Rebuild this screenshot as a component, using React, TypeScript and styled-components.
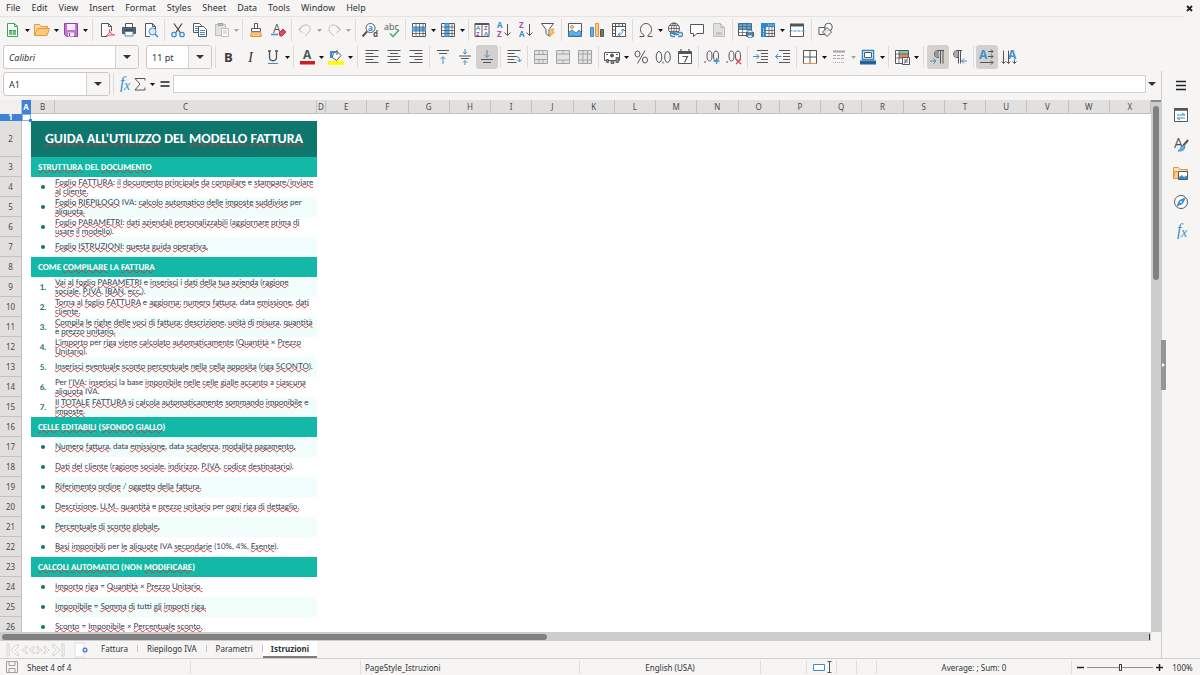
import React from 'react';
import styled, { createGlobalStyle, css } from 'styled-components';

const GlobalStyle = createGlobalStyle`
  *, *::before, *::after { box-sizing: border-box; }
  html, body, #root { height: 100%; }
  body {
    margin: 0;
    overflow: hidden;
    background: #f6f5f4;
    color: #2e3436;
    font-family: "Noto Sans", "Open Sans", sans-serif;
    font-size: 8px;
  }
  button, input { font: inherit; color: inherit; }
  button { background: none; border: 0; padding: 0; }
`;

/* ---------- palette ---------- */
const ink = '#55565a';
const blue = '#3b8fd0';
const orange = '#e8943a';
const line = '#d5d3d1';

/* ---------- layout parts ---------- */
const AppWindow = styled.div`
  display: flex;
  flex-direction: column;
  height: 100vh;
  overflow: hidden;
`;

const MenuBar = styled.nav`
  display: flex;
  align-items: center;
  gap: 11px;
  flex: none;
  height: 17px;
  margin-right: 16px;
  padding-left: 6px;
  border-bottom: 1px solid #e4e2e0;
  font-size: 9px;
  line-height: 16px;
`;

const MenuItem = styled.button``;

const CloseButton = styled.button`
  margin-left: auto;
  margin-right: -9px;
  display: flex;
`;

const ToolBar = styled.div`
  display: flex;
  align-items: center;
  flex: none;
  height: 27px;
  padding: 0 0 1px 2px;
`;

const ToolButton = styled.button<{ $active?: boolean; $muted?: boolean }>`
  display: flex;
  align-items: center;
  justify-content: center;
  flex: none;
  width: 22px;
  height: 24px;
  border-radius: 3px;
  ${p => p.$active && css`background: #d3d0cd;`}
  ${p => p.$muted && css`opacity: 0.5;`}
`;

const ArrowButton = styled.button<{ $muted?: boolean }>`
  display: flex;
  align-items: center;
  justify-content: center;
  flex: none;
  width: 7px;
  height: 24px;
  ${p => p.$muted && css`opacity: 0.35;`}
`;

const Divider = styled.span<{ $wide?: boolean }>`
  flex: none;
  width: ${p => (p.$wide ? 7 : 5)}px;
  height: 22px;
  background: linear-gradient(#dedcda, #dedcda) center / 1px 100% no-repeat;
`;

const Combo = styled.div<{ $width: number }>`
  display: flex;
  flex: none;
  width: ${p => p.$width}px;
  height: 24px;
  margin: 0 6px 0 1px;
  border: 1px solid #cdc7c2;
  border-radius: 3px;
  background: #fff;
  overflow: hidden;
  &:last-of-type { margin-right: 1px; }
`;

const ComboInput = styled.input<{ $italic?: boolean }>`
  flex: 1;
  min-width: 0;
  padding: 0 5px;
  border: 0;
  outline: 0;
  background: none;
  font-size: 9px;
  font-style: ${p => (p.$italic ? 'italic' : 'normal')};
`;

const ComboArrow = styled.button`
  display: flex;
  align-items: center;
  justify-content: center;
  width: 23px;
  border-left: 1px solid ${line};
  background: #f6f5f4;
`;

const Workspace = styled.div`
  display: flex;
  flex: 1;
  min-height: 0;
`;

const Document = styled.main`
  display: flex;
  flex-direction: column;
  flex: 1;
  min-width: 0;
`;

const FormulaBar = styled.div`
  display: flex;
  align-items: center;
  flex: none;
  height: 29px;
  padding: 0 3px 3px 2px;
`;

const FormulaButton = styled.button<{ $width: number }>`
  display: flex;
  align-items: center;
  justify-content: center;
  width: ${p => p.$width}px;
  height: 22px;
`;

const FormulaInput = styled.input`
  flex: 1;
  min-width: 0;
  height: 18px;
  padding: 0 4px;
  border: 1px solid ${line};
  outline: 0;
  background: #fff;
  font-size: 9px;
`;

const SheetArea = styled.div`
  display: flex;
  flex: 1;
  min-height: 0;
`;

const SheetView = styled.div`
  flex: 1;
  min-width: 0;
  overflow: hidden;
  background: #fff;
`;

const VerticalScroll = styled.div`
  flex: none;
  width: 10px;
  padding: 4px 2px 0;
  border-top: 2px solid #8a8a8a;
  background: #cdcdcd;
`;

const HorizontalScroll = styled.div`
  display: flex;
  align-items: center;
  justify-content: space-between;
  flex: none;
  height: 9px;
  margin-right: 10px;
  padding: 0 1px 0 2px;
  background: #cdcdcd;
`;

const VerticalThumb = styled.div`
  height: 33%;
  border-radius: 3px;
  background: #808080;
`;

const HorizontalThumb = styled.div`
  width: 47.5%;
  height: 6px;
  border-radius: 3px;
  background: #808080;
`;

const ScrollEnd = styled.span`
  width: 1px;
  height: 6px;
  background: #333;
`;

/* ---------- sheet ---------- */
const Grid = styled.table`
  width: 100%;
  table-layout: fixed;
  border-collapse: separate;
  border-spacing: 0;
`;

const headCell = css<{ $selected?: boolean }>`
  padding: 0;
  border-right: 1px solid #c3c2c1;
  border-bottom: 1px solid #c3c2c1;
  background: #e1e0df;
  color: #4a4a4a;
  font-weight: 400;
  text-align: center;
  ${p => p.$selected && css`
    background: #3d82d8;
    border-color: #3d82d8;
    color: #fff;
    font-weight: 700;
  `}
`;

const ColumnHead = styled.th<{ $selected?: boolean }>`
  ${headCell}
  height: 14px;
  line-height: 12px;
  overflow: hidden;
`;

const Corner = styled.td`
  padding: 0;
  border-right: 1px solid #c3c2c1;
  background: #f1f0ef;
`;

const RowHead = styled.th<{ $selected?: boolean }>`
  ${headCell}
  line-height: 6px;
`;

const Row = styled.tr<{ $height: number }>`
  height: ${p => p.$height}px;
`;

const Blank = styled.td`
  padding: 0;
`;

const ActiveCell = styled.td`
  position: relative;
  padding: 0;
  border: 1px solid #7fb0ea;
  &::after {
    content: "";
    position: absolute;
    right: -2px;
    bottom: -2px;
    width: 3px;
    height: 3px;
    background: #3d82d8;
  }
`;

const headingFont = css`
  font-family: Carlito, Lato, sans-serif;
  font-weight: 700;
  text-rendering: geometricPrecision;
  white-space: nowrap;
`;

const itemFont = css`
  font-family: Lato, Carlito, sans-serif;
  font-size: 8px;
  line-height: 9px;
  text-rendering: geometricPrecision;
`;

const TitleCell = styled.td`
  ${headingFont}
  padding: 0 0 1px;
  background: #0f766e;
  color: #fff;
  font-size: 14px;
  text-align: center;
`;

const SectionCell = styled.td`
  ${headingFont}
  padding: 0 0 0 7px;
  background: #14b8a6;
  color: #fff;
  font-size: 9px;
  line-height: 9px;
`;

const MarkerCell = styled.td`
  ${itemFont}
  padding: 0;
  color: #0f766e;
  font-weight: 700;
  text-align: center;
`;

const TextCell = styled.td<{ $tinted: boolean }>`
  ${itemFont}
  padding: 0 0 1px;
  background: ${p => (p.$tinted ? '#f0fdfa' : '#fff')};
  color: #334155;
  white-space: pre;
`;

const Misspelled = styled.span`
  text-decoration: underline wavy #e23030 1px;
  text-decoration-skip-ink: none;
  text-underline-offset: -1px;
`;

const Dot = styled.span`
  display: inline-block;
  width: 4px;
  height: 4px;
  border-radius: 2px;
  background: #0f766e;
  vertical-align: middle;
`;

/* ---------- sheet tabs, side bar, status bar ---------- */
const TabBar = styled.div`
  display: flex;
  align-items: stretch;
  flex: none;
  height: 17px;
  padding-left: 5px;
`;

const TabNav = styled.div`
  display: flex;
  align-items: center;
  width: 70px;
`;

const TabNavButton = styled.button`
  display: flex;
  width: 15px;
  justify-content: center;
`;

const AddTab = styled.button`
  display: flex;
  align-items: center;
  width: 14px;
  margin-right: 3px;
`;

const Tab = styled.button<{ $active?: boolean }>`
  padding: 0 10px 0 9px;
  border-bottom: 2px solid transparent;
  background: linear-gradient(#c9c7c5, #c9c7c5) right center / 1px 7px no-repeat;
  ${p => p.$active && css`
    padding: 0 8px;
    border-color: #7c7c7c;
    background: #fff;
    font-weight: 700;
  `}
`;

const SideBar = styled.aside`
  position: relative;
  display: flex;
  flex-direction: column;
  flex: none;
  width: 39px;
  border-left: 1px solid #d0cecc;
`;

const SideButton = styled.button`
  display: flex;
  align-items: center;
  justify-content: center;
  height: 29px;
`;

const SideHandle = styled.button`
  position: absolute;
  left: -1px;
  top: 50%;
  display: flex;
  align-items: center;
  justify-content: center;
  width: 5px;
  height: 50px;
  transform: translateY(-50%);
  background: #959595;
`;

const StatusBar = styled.footer`
  display: flex;
  align-items: center;
  flex: none;
  height: 17px;
  border-top: 1px solid #d0cecc;
`;

const StatusCell = styled.div<{ $width?: number; $left?: boolean }>`
  display: flex;
  align-items: center;
  justify-content: ${p => (p.$left ? 'flex-start' : 'center')};
  gap: 7px;
  flex: ${p => (p.$width ? `0 1 ${p.$width}px` : '1')};
  height: 13px;
  padding-left: ${p => (p.$left ? 4 : 0)}px;
  border-right: 1px solid #e0dedc;
  white-space: nowrap;
`;

const ZoomControls = styled.div`
  display: flex;
  align-items: center;
  gap: 3px;
  flex: none;
  width: 91px;
  padding-left: 5px;
`;

const ZoomStep = styled.button`
  display: flex;
`;

const ZoomSlider = styled.input`
  appearance: none;
  flex: 1;
  min-width: 0;
  height: 8px;
  margin: 0;
  background: linear-gradient(#8e8e8e, #8e8e8e) center / 100% 1px no-repeat;
  &::-webkit-slider-thumb {
    appearance: none;
    width: 3px;
    height: 7px;
    border: 1px solid #444;
    background: #f6f5f4;
  }
`;

const ZoomValue = styled.span`
  flex: none;
  width: 37px;
  padding-left: 2px;
  text-align: center;
`;

/* ---------- icons ---------- */
const IconFrame = styled.svg`
  overflow: visible;
`;

const Svg = ({ children, w = 16, h = 16 }: { children: React.ReactNode; w?: number; h?: number }) => (
  <IconFrame width={w} height={h} viewBox={`0 0 ${w} ${h}`} fill="none" stroke={ink} strokeWidth="1" aria-hidden="true">
    {children}
  </IconFrame>
);

const Glyph = ({ x, y, size, color = ink, bold, italic, serif, children }: {
  x: number; y: number; size: number; color?: string; bold?: boolean; italic?: boolean; serif?: boolean; children: string;
}) => (
  <text
    x={x}
    y={y}
    fontSize={size}
    fill={color}
    stroke="none"
    fontWeight={bold ? 700 : 400}
    fontStyle={italic ? 'italic' : 'normal'}
    fontFamily={serif ? '"Liberation Serif", serif' : '"Open Sans", sans-serif'}
  >
    {children}
  </text>
);

const Triangle = ({ big }: { big?: boolean }) =>
  big ? (
    <svg width="8" height="4" viewBox="0 0 8 4" aria-hidden="true"><path d="M0 0h8L4 4z" fill="#2e3436" /></svg>
  ) : (
    <svg width="5" height="3" viewBox="0 0 5 3" aria-hidden="true"><path d="M0 0h5L2.500 3z" fill="#111" /></svg>
  );

const page = 'M2.500 1.500h7l4 4v9h-11z';

const icons: Record<string, React.ReactNode> = {
  new: <><path d="M2.500 1.500h7l3 3v10h-10z" stroke="#36a852" fill="#fff" /><path d="M9.500 1.500v3h3" stroke="#36a852" /><path d="M4 8h7v5H4z" fill="#36a852" stroke="none" /><path d="M4 10h7M4 12h7M7.500 8v5" stroke="#d6f0dc" strokeWidth=".7" /></>,
  open: <><path d="M.5 13.500v-11h5l1.500 2h6.500v3" fill="#fbd9a2" stroke={orange} /><path d="M.5 13.500l3-7h12l-2.500 7z" fill="#fcca7c" stroke={orange} /></>,
  save: <><path d="M1.500 1.500h13v13h-11l-2-2z" fill="#c276cf" stroke="#9440a5" /><path d="M4 2h8v6H4z" fill="#f8eefa" stroke="none" /><path d="M5 10.500h6v4H5z" fill="#f8eefa" stroke="none" /><path d="M6.500 11v3" stroke="#9440a5" /></>,
  pdf: <><path d="M8 14.500H2.500v-13h7l3 3V9" fill="#fff" /><path d="M9.500 1.500v3h3" /><path d="M7 14c3-2 4-4 3.500-6.500M10.500 8c.5 3 2 4.500 5 5-3-.5-5.500 0-8 1.500" stroke="#e0455a" /></>,
  print: <><path d="M4.500 5V1.500h7V5" fill="#fff" /><path d="M1.500 5.500h13v6h-13z" fill="#66686b" /><path d="M4 9.500h8v4.500H4z" fill="#fff" stroke={blue} /><path d="M3 8h10" stroke="#333" /></>,
  preview: <><path d="M7 14.500H2.500v-13h7l3 3V7" fill="#fff" /><path d="M9.500 1.500v3h3" /><circle cx="9.500" cy="9.500" r="3.500" fill="#d8ecfb" stroke={blue} /><path d="M12 12l3 3" stroke={blue} strokeWidth="1.500" /></>,
  cut: <><path d="M4 1.500l6.500 9.500M12 1.500L5.500 11" stroke="#444" strokeWidth="1.200" /><circle cx="4" cy="12.500" r="2.200" stroke={blue} strokeWidth="1.300" /><circle cx="12" cy="12.500" r="2.200" stroke={blue} strokeWidth="1.300" /></>,
  copy: <><path d="M1.500 1.500h6l2 2v7h-8z" fill="#fff" /><path d="M3 4.500h3M3 6.500h3M3 8.500h3" stroke={blue} /><path d="M6.500 4.500h5l3 3v7h-8z" fill="#fff" /><path d="M8 8.500h5M8 10.500h5M8 12.500h5" stroke={blue} /></>,
  paste: <><path d="M1.500 2.500h10v11h-10z" fill="#cfcfcf" stroke="#888" /><path d="M4 1.500h5v2H4z" fill="#888" /><path d="M7.500 6.500h7v8h-7z" fill="#fff" stroke="#888" /><path d="M9 9h4M9 11h4" stroke="#999" /></>,
  brush: <><path d="M6.500 1.500h3v5h-3z" fill="#fff" /><path d="M3.500 6.500h9v3h-9z" fill="#fff" /><path d="M3.500 10h9l1 4.500h-11z" fill="#fbc684" stroke={orange} /></>,
  clear: <><Glyph x={3} y={11} size={12}>A</Glyph><path d="M1 12.500h7" stroke={blue} strokeWidth="1.500" /><path d="M9 11l4-4 3 3-4 4h-2z" fill="#e0455a" stroke="#c93648" /></>,
  undo: <path d="M1.500 7.500l4-4m-4 4l4 3M2 7.500h1c2-3.500 4-5 7-4.500 4 1 4 6 1 8l-3 3" stroke="#8a8a8a" />,
  redo: <path d="M14.500 7.500l-4-4m4 4l-4 3M14 7.500h-1c-2-3.500-4-5-7-4.500-4 1-4 6-1 8l3 3" stroke="#8a8a8a" />,
  find: <><circle cx="8.500" cy="6" r="4.500" fill="#fff" /><path d="M5 9.500L.5 14.500" strokeWidth="2" /><Glyph x={6} y={9} size={8} color={blue} bold>a</Glyph><Glyph x={11} y={15} size={8} bold>d</Glyph></>,
  spell: <><Glyph x={0} y={8} size={9}>abc</Glyph><path d="M6 11.500l3 3 6-6.500" stroke="#36b067" strokeWidth="1.500" /></>,
  row: <><path d="M1.500 1.500h13v13h-13z" fill="#fff" /><path d="M1.500 5h13v4h-13z" fill="#63b0e8" stroke={blue} /><path d="M5 1.500v13M8.500 1.500v13M12 1.500v13M1.500 11.500h13" strokeWidth=".8" /></>,
  column: <><path d="M1.500 1.500h13v13h-13z" fill="#fff" /><path d="M5 1.500h4v13H5z" fill="#63b0e8" stroke={blue} /><path d="M1.500 5h13M1.500 8.500h13M1.500 11.500h13M12 1.500v13" strokeWidth=".8" /></>,
  sort: <><path d="M1 1.500h14v13H1zM8 2v12" fill="#fff" /><path d="M1 2h14" strokeWidth="2" /><Glyph x={2} y={8} size={6} color={blue} bold>A</Glyph><Glyph x={2} y={14} size={6} color="#a94bb8" bold>Z</Glyph><Glyph x={10} y={8} size={6} color="#a94bb8" bold>Z</Glyph><Glyph x={10} y={14} size={6} color={blue} bold>A</Glyph></>,
  az: <><Glyph x={1} y={6} size={8} color={blue} bold>A</Glyph><Glyph x={1} y={15} size={8} color="#a94bb8" bold>Z</Glyph><path d="M11.500 2v11M8.500 10.500l3 3 3-3" /></>,
  za: <><Glyph x={1} y={6} size={8} color="#a94bb8" bold>Z</Glyph><Glyph x={1} y={15} size={8} color={blue} bold>A</Glyph><path d="M11.500 2v11M8.500 10.500l3 3 3-3" /></>,
  filter: <><path d="M1.500 1.500h12l-4.500 6v6.500l-3-2.500v-4z" fill="#fff" /><path d="M11.500 7L8 11h2.500l-1 4 5-5h-2.500l2-3z" fill="#fcca7c" stroke={orange} strokeWidth=".8" /></>,
  image: <><path d="M1.500 1.500h13v13h-13z" fill="#fff" /><path d="M2 13V10l3-2 4 3 3-3 2 2v4H2z" fill="#63b0e8" stroke={blue} /><circle cx="5" cy="5" r="1.500" fill="#fcca7c" stroke={orange} /></>,
  chart: <><path d="M1.500 5.500h3v9h-3z" fill="#63b0e8" stroke={blue} /><path d="M6.500 1.500h3v13h-3z" fill="#fcca7c" stroke={orange} /><path d="M11.500 7.500h3v7h-3z" fill="#777" /></>,
  pivot: <><path d="M1.500 1.500h13v13h-13z" fill="#fff" /><path d="M1.500 4.500h13M4.500 1.500v13M8 1.500v3M11.500 1.500v3M1.500 8h3M1.500 11.500h3" /><path d="M7 12.500c4 0 5-2 5-5.500m-2 2l2-2 2 2m-5 1.500l-2 2 2 1.500" stroke={blue} /></>,
  omega: <path d="M1.500 14.500h4.500v-1.500C3.500 12 2.500 9.500 2.500 7.500c0-3.500 2.500-6 5.500-6s5.500 2.500 5.500 6c0 2-1 4.500-3.500 5.500v1.500h4.500" />,
  link: <><circle cx="7" cy="6.500" r="5.500" fill="#fff" /><path d="M1.500 6.500h11M7 1v10M2.500 3.500h9M2.500 9.500h9" strokeWidth=".8" /><ellipse cx="7" cy="6.500" rx="2.500" ry="5.500" strokeWidth=".8" /><path d="M8 10.500H5.500a2 2 0 000 4H8m3 0h2.500a2 2 0 000-4H11M7 12.500h5" stroke={blue} strokeWidth="1.300" /></>,
  comment: <path d="M1.500 2.500h13v9H8l-3.500 3v-3h-3z" fill="#fff" />,
  footer: <><path d={page} fill="#ccc" stroke="#888" /><path d="M9.500 1.500v4h4" stroke="#888" /><path d="M5 10h6v3H5z" fill="#999" stroke="none" /></>,
  printRange: <><path d="M.5 1.500h13v12H.5z" fill="#fff" /><path d="M1 2h12v5H1z" fill="#63b0e8" stroke={blue} /><path d="M.5 4.500h13M.5 7.500h13M.5 10.500h13M4.500 1.500v12M9 1.500v12" strokeWidth=".7" /><path d="M8.500 10.500h7v4h-7z" fill="#777" /><path d="M10 8.500h4v2h-4zM10 13h4v2.500h-4z" fill="#fff" stroke={blue} strokeWidth=".8" /></>,
  freeze: <><path d="M1.500 1.500h13v13h-13z" fill="#fff" /><path d="M1 1h5v14H1zM6 1h9v4H6z" fill="#2f86cf" stroke="none" /><path d="M6 8.500h9M6 11.500h9M9 5v10M12 5v10" strokeWidth=".8" /><path d="M3.500 6v8M8 3h6" stroke="#bfe0f7" strokeDasharray="1.500 1" /></>,
  split: <><path d="M1.500 2.500h13v12h-13z" fill="#fff" /><path d="M1 3h14" stroke="#555" strokeWidth="3" /><path d="M.5 9h15" stroke={blue} strokeDasharray="3 1" /></>,
  draw: <><path d="M1 5.500h6v7H1z" fill="#fff" /><circle cx="10.500" cy="5" r="3.800" fill="#fff" /><path d="M4.500 10l4.500-4.500L13.500 10 9 14.500z" fill="#f6f5f4" fillOpacity=".7" /></>,
  bold: <Glyph x={3} y={13} size={13} color="#3a3a3c" bold>B</Glyph>,
  italic: <Glyph x={5} y={13} size={15} color="#3a3a3c" italic serif>I</Glyph>,
  underline: <><path d="M4.500 2v6c0 5 7 5 7 0V2M3 2h3M10 2h3" strokeWidth="1.300" /><path d="M3 14.500h10" stroke={blue} /></>,
  fontColor: <><Glyph x={4} y={10} size={12} bold>A</Glyph><path d="M1 12h15v3.500H1z" fill="#c9211e" stroke="none" /></>,
  fillColor: <><path d="M5 4.500l4-2 4 4-4.500 5-4-3z" fill="#fff" /><path d="M9 1v5" /><path d="M3 9V3h5" stroke={blue} strokeWidth="2" /><path d="M0 12h16v4H0z" fill="#ffff00" stroke="none" /></>,
  left: <path d="M1.500 1.500h13M1.500 4.500h8M1.500 7.500h13M1.500 10.500h8M1.500 13.500h13" />,
  center: <path d="M1.500 1.500h13M4 4.500h8M1.500 7.500h13M4 10.500h8M1.500 13.500h13" />,
  right: <path d="M1.500 1.500h13M6.500 4.500h8M1.500 7.500h13M6.500 10.500h8M1.500 13.500h13" />,
  top: <><path d="M2 1.500h12M4 4.500h8" /><path d="M8 15V8M5.500 10L8 7.500l2.500 2.500" stroke={blue} /></>,
  middle: <><path d="M2 7h12M4 9.500h8" /><path d="M8 0v4.500M6 3l2 2 2-2M8 16v-4M6 13.500l2-2 2 2" stroke={blue} /></>,
  bottom: <><path d="M2 10.500h12M4 13.500h8" /><path d="M8 1v7M5.500 6L8 8.500 10.500 6" stroke={blue} /></>,
  wrap: <><path d="M1.500 1.500h13M1.500 4.500h7M1.500 7.500h9M1.500 10.500h7M1.500 13.500h9" /><path d="M10 7.500c3 0 3.500 1.500 3.500 5M11 10.500l2.500 2.500 2-2.500" stroke={blue} /></>,
  mergeAll: <path d="M1.500 1.500h13v13h-13zM1.500 5.500h13M1.500 10.500h13M6 1.500v4M10 1.500v4M6 10.500v4M10 10.500v4" fill="#d2d2d2" />,
  merge: <path d="M1.500 1.500h13v13h-13zM1.500 5h13M1.500 11h13M8 1.500V5M8 11v3.500" fill="#d2d2d2" />,
  unmerge: <path d="M1.500 1.500h13v13h-13zM1.500 5h13M1.500 11h13M6 1.500v13M10.500 1.500v13" fill="#d2d2d2" />,
  currency: <><path d="M.5 3.500h15v8H.5z" fill="#fff" /><circle cx="8" cy="6.500" r="1.500" fill="#555" /><path d="M2 5.500h2M12 5.500h2" /><path d="M2.500 10.500h2v3h-2zM7 11.500h3v3H7zM12 8.500h2.500v5H12z" fill="#8a8a8a" strokeWidth=".8" /></>,
  percent: <><ellipse cx="4.500" cy="5" rx="2.500" ry="3" /><ellipse cx="12" cy="11" rx="2.500" ry="3" /><path d="M12 1.500L4.500 14.500" /></>,
  number: <><ellipse cx="4" cy="8" rx="2.800" ry="5.500" /><ellipse cx="12.500" cy="8" rx="2.800" ry="5.500" /><path d="M8 12.500v2" /></>,
  date: <><path d="M1.500 2.500h13v12h-13z" fill="#fff" /><path d="M1 4h14" strokeWidth="2" /><path d="M4 0v3M12 0v3M5.500 7.500h5l-3 6" strokeWidth="1.200" /></>,
  addDecimal: <><path d="M1 12v2" /><ellipse cx="5.500" cy="7" rx="2.500" ry="5" /><ellipse cx="12" cy="7" rx="2.500" ry="5" /><path d="M12.500 9v6M9.500 12h6" stroke={blue} strokeWidth="1.300" /></>,
  delDecimal: <><path d="M1 12v2" /><ellipse cx="5.500" cy="7" rx="2.500" ry="5" /><ellipse cx="12" cy="7" rx="2.500" ry="5" /><path d="M10 10l5 5M15 10l-5 5" stroke="#e0455a" strokeWidth="1.300" /></>,
  indent: <><path d="M4 1.500h11M8 4.500h7M8 7.500h7M8 10.500h7M4 13.500h11" /><path d="M0 7.500h6M3.500 5L6 7.500 3.500 10" stroke={blue} /></>,
  outdent: <><path d="M4 1.500h11M8 4.500h7M8 7.500h7M8 10.500h7M4 13.500h11" /><path d="M.5 7.500h6M3 5L.5 7.500 3 10" stroke={blue} /></>,
  borders: <><path d="M1.500 1.500h13v13h-13zM8 1.500v13M1.500 8h13" fill="#fff" /><path d="M1.500 14.500h13" stroke={orange} /></>,
  borderStyle: <><path d="M2 2.500h12" strokeWidth="2" /><path d="M2 6.500h12M2 9.500h12" strokeDasharray="3 1" /><path d="M2 13.500h12" strokeDasharray="1 1" /></>,
  borderColor: <><path d="M2.500 1.500h11v9h-11z" fill="#fff" stroke="#2f86cf" strokeWidth="1.500" /><path d="M4.500 3.500h7v5h-7z" /><path d="M0 11.500h16v4H0z" fill="#2a6099" stroke="none" /></>,
  conditional: <><path d="M1.500 1.500h13v13h-13z" fill="#fff" /><path d="M5 2h9v3H5z" fill="#7ccf91" stroke="none" /><path d="M5 5h9v4H5z" fill="#ee8170" stroke="none" /><path d="M1.500 5h13M1.500 9h13M5 1.500v13" strokeWidth=".8" /><path d="M8.500 8.500h7v7h-7z" fill="#fff" /><path d="M10 11h4M10 13h4M13.500 9.500l-3 5" strokeWidth=".8" /></>,
  ltr: <><path d="M9 8.500H8a3.500 3.500 0 010-7h6M10.500 1.500v13M13 1.500v13" /><path d="M9 2v6H8a3 3 0 010-6z" fill="#999" stroke="none" /><path d="M0 12h6M3.500 9.500L6 12l-2.500 2.500" stroke={blue} /></>,
  rtl: <><path d="M6 8.500H5a3.500 3.500 0 010-7h5M6.500 1.500v13M8.500 1.500v13" /><path d="M6 2v6H5a3 3 0 010-6z" fill="#aaa" stroke="none" /><path d="M15 12H9.500M12 9.500L9.500 12l2.500 2.500" stroke={blue} /></>,
  horizontalText: <><Glyph x={0} y={10} size={12} color={blue} bold>A</Glyph><path d="M9 2.500h5M12 .5l2 2-2 2M9 7.500h5M12 5.500l2 2-2 2M1 13.500h13M12 11.500l2 2-2 2" /></>,
  verticalText: <><Glyph x={7} y={10} size={12} color={blue} bold>A</Glyph><path d="M2.500 1.500v13M.5 12.500l2 2 2-2M7.500 1.500v13M5.500 12.500l2 2 2-2M13.500 10.500v4M11.500 12.500l2 2 2-2" /></>,
  properties: <><path d="M1.500 1.500h13v13h-13z" fill="#fff" /><path d="M1 2.500h14" strokeWidth="2.500" /><path d="M4 8h8M4 11h8M9 6l3 2M7 13l-3-2" stroke={blue} /></>,
  styles: <><Glyph x={1} y={12} size={14}>A</Glyph><path d="M15 4l-5 6" strokeWidth="2" /><path d="M10 9l2 2c-1 4-4 4-7 4 3-1 2-4 5-6z" fill="#63b0e8" stroke={blue} /></>,
  gallery: <><path d="M.5 13.500v-11h5l1.500 2h7.500v3" fill="#fbe3c0" stroke={orange} /><path d="M.5 13.500l1-7h4v7z" fill="#fcca7c" stroke={orange} /><path d="M5.500 6.500h9v8h-9z" fill="#fff" /><path d="M6 12l3-2 2 2 2-1.500 1 1V14H6z" fill={blue} stroke="none" /></>,
  navigator: <><circle cx="8" cy="8" r="6.500" fill="#fff" /><path d="M12 4l-2.500 5.500L4 12l2.500-5.500z" fill={blue} stroke={blue} /><circle cx="8" cy="8" r="1" fill="#fff" stroke="none" /></>,
  menu: <path d="M3 3.500h10M3 7.500h10M3 11.500h10" stroke="#222" strokeWidth="1.500" />,
  fx: <><Glyph x={4} y={12} size={16} color={blue} italic serif>f</Glyph><Glyph x={8} y={14} size={14} color={blue} italic serif>x</Glyph></>,
  sigma: <path d="M13 4.500V2.500H3l5 5.500-5 6h10v-2.500" />,
  equals: <path d="M3.500 6h9M3.500 10h9" strokeWidth="1.800" />,
};

const Icon = ({ name }: { name: string }) => <Svg>{icons[name]}</Svg>;

/* ---------- toolbars ---------- */
type Tool = { id: string; label: string; menu?: boolean; muted?: boolean; active?: boolean } | 'sep' | 'wide';

const standardTools: Tool[] = [
  { id: 'new', label: 'New', menu: true }, { id: 'open', label: 'Open', menu: true }, { id: 'save', label: 'Save', menu: true }, 'wide',
  { id: 'pdf', label: 'Export as PDF' }, { id: 'print', label: 'Print' }, { id: 'preview', label: 'Print Preview' }, 'sep',
  { id: 'cut', label: 'Cut' }, { id: 'copy', label: 'Copy' }, { id: 'paste', label: 'Paste', menu: true, muted: true }, 'sep',
  { id: 'brush', label: 'Clone Formatting' }, { id: 'clear', label: 'Clear Formatting' }, 'sep',
  { id: 'undo', label: 'Undo', menu: true, muted: true }, { id: 'redo', label: 'Redo', menu: true, muted: true }, 'wide',
  { id: 'find', label: 'Find and Replace' }, { id: 'spell', label: 'Spelling' }, 'sep',
  { id: 'row', label: 'Row', menu: true }, { id: 'column', label: 'Column', menu: true }, 'sep',
  { id: 'sort', label: 'Sort' }, { id: 'az', label: 'Sort Ascending' }, { id: 'za', label: 'Sort Descending' }, { id: 'filter', label: 'AutoFilter' }, 'sep',
  { id: 'image', label: 'Image' }, { id: 'chart', label: 'Chart' }, { id: 'pivot', label: 'Pivot Table' }, 'sep',
  { id: 'omega', label: 'Special Character', menu: true }, { id: 'link', label: 'Hyperlink' }, { id: 'comment', label: 'Comment' }, { id: 'footer', label: 'Headers and Footers', muted: true }, 'sep',
  { id: 'printRange', label: 'Print Area' }, { id: 'freeze', label: 'Freeze', menu: true }, { id: 'split', label: 'Split Window' }, 'wide',
  { id: 'draw', label: 'Draw Functions' },
];

const formattingTools: Tool[] = [
  'sep',
  { id: 'bold', label: 'Bold' }, { id: 'italic', label: 'Italic' }, { id: 'underline', label: 'Underline', menu: true }, 'sep',
  { id: 'fontColor', label: 'Font Color', menu: true }, { id: 'fillColor', label: 'Background Color', menu: true }, 'wide',
  { id: 'left', label: 'Align Left' }, { id: 'center', label: 'Center' }, { id: 'right', label: 'Align Right' }, 'sep',
  { id: 'top', label: 'Align Top' }, { id: 'middle', label: 'Center Vertically' }, { id: 'bottom', label: 'Align Bottom', active: true }, 'sep',
  { id: 'wrap', label: 'Wrap Text' }, 'sep',
  { id: 'mergeAll', label: 'Merge and Center', muted: true }, { id: 'merge', label: 'Merge Cells', muted: true }, { id: 'unmerge', label: 'Unmerge Cells', muted: true }, 'sep',
  { id: 'currency', label: 'Currency', menu: true }, { id: 'percent', label: 'Percent' }, { id: 'number', label: 'Number' }, { id: 'date', label: 'Date' }, 'sep',
  { id: 'addDecimal', label: 'Add Decimal Place' }, { id: 'delDecimal', label: 'Delete Decimal Place' }, 'sep',
  { id: 'indent', label: 'Increase Indent' }, { id: 'outdent', label: 'Decrease Indent' }, 'sep',
  { id: 'borders', label: 'Borders', menu: true }, { id: 'borderStyle', label: 'Border Style', menu: true, muted: true }, { id: 'borderColor', label: 'Border Color', menu: true }, 'sep',
  { id: 'conditional', label: 'Conditional', menu: true }, 'wide',
  { id: 'ltr', label: 'Left-To-Right', active: true }, { id: 'rtl', label: 'Right-To-Left' }, 'sep',
  { id: 'horizontalText', label: 'Text direction from left to right', active: true }, { id: 'verticalText', label: 'Text direction from top to bottom' },
];

const Tools = ({ items }: { items: Tool[] }) => (
  <>
    {items.map((tool, i) =>
      typeof tool === 'string' ? (
        <Divider key={i} $wide={tool === 'wide'} />
      ) : (
        <React.Fragment key={tool.id}>
          <ToolButton aria-label={tool.label} $active={tool.active} $muted={tool.muted}><Icon name={tool.id} /></ToolButton>
          {tool.menu && <ArrowButton aria-label={`${tool.label} options`} $muted={tool.muted}><Triangle /></ArrowButton>}
        </React.Fragment>
      ),
    )}
  </>
);

/* ---------- sheet content: words in braces are marked by the spelling checker ---------- */
type SheetRow =
  | { kind: 'title'; text: string }
  | { kind: 'section'; text: string }
  | { kind: 'item'; marker?: string; text: string };

const sheetRows: SheetRow[] = [
  { kind: 'title', text: "{GUIDA} {ALL'UTILIZZO} DEL {MODELLO} {FATTURA}" },
  { kind: 'section', text: '{STRUTTURA} DEL {DOCUMENTO}' },
  { kind: 'item', text: '{Foglio} {FATTURA}: {il} {documento} {principale} {da} {compilare} e {stampare/inviare}\n{al} {cliente.}' },
  { kind: 'item', text: '{Foglio} {RIEPILOGO} IVA: {calcolo} {automatico} {delle} {imposte} {suddivise} per\n{aliquota.}' },
  { kind: 'item', text: '{Foglio} {PARAMETRI}: {dati} {aziendali} {personalizzabili} ({aggiornare} {prima} {di}\n{usare} {il} {modello}).' },
  { kind: 'item', text: '{Foglio} {ISTRUZIONI}: {questa} {guida} {operativa.}' },
  { kind: 'section', text: 'COME {COMPILARE} LA {FATTURA}' },
  { kind: 'item', marker: '1.', text: '{Vai} {al} {foglio} {PARAMETRI} e {inserisci} i {dati} {della} {tua} {azienda} ({ragione}\n{sociale}, {P.IVA}, {IBAN}, {ecc.}).' },
  { kind: 'item', marker: '2.', text: '{Torna} {al} {foglio} {FATTURA} e {aggiorna:} {numero} {fattura}, data {emissione}, {dati}\n{cliente.}' },
  { kind: 'item', marker: '3.', text: '{Compila} {le} {righe} {delle} {voci} {di} {fattura:} {descrizione}, {unità} {di} {misura}, {quantità}\ne {prezzo} {unitario.}' },
  { kind: 'item', marker: '4.', text: "{L'importo} per {riga} {viene} {calcolato} {automaticamente} ({Quantità} × {Prezzo}\n{Unitario})." },
  { kind: 'item', marker: '5.', text: '{Inserisci} {eventuale} {sconto} {percentuale} {nella} {cella} {apposita} ({riga} {SCONTO}).' },
  { kind: 'item', marker: '6.', text: "Per {l'IVA}: {inserisci} la base {imponibile} {nelle} {celle} {gialle} {accanto} a {ciascuna}\n{aliquota} IVA." },
  { kind: 'item', marker: '7.', text: '{Il} {TOTALE} {FATTURA} {si} {calcola} {automaticamente} {sommando} {imponibile} e\n{imposte.}' },
  { kind: 'section', text: '{CELLE} {EDITABILI} ({SFONDO} {GIALLO})' },
  { kind: 'item', text: '{Numero} {fattura}, data {emissione}, data {scadenza}, {modalità} {pagamento.}' },
  { kind: 'item', text: '{Dati} {del} {cliente} ({ragione} {sociale}, {indirizzo}, {P.IVA}, {codice} {destinatario}).' },
  { kind: 'item', text: '{Riferimento} {ordine} / {oggetto} {della} {fattura.}' },
  { kind: 'item', text: '{Descrizione}, {U.M.}, {quantità} e {prezzo} {unitario} per {ogni} {riga} {di} {dettaglio.}' },
  { kind: 'item', text: '{Percentuale} {di} {sconto} {globale.}' },
  { kind: 'item', text: '{Basi} {imponibili} per {le} {aliquote} IVA {secondarie} (10%, 4%, {Esente}).' },
  { kind: 'section', text: '{CALCOLI} {AUTOMATICI} (NON {MODIFICARE})' },
  { kind: 'item', text: '{Importo} {riga} = {Quantità} × {Prezzo} {Unitario.}' },
  { kind: 'item', text: '{Imponibile} = {Somma} {di} tutti {gli} {importi} {riga.}' },
  { kind: 'item', text: '{Sconto} = {Imponibile} × {Percentuale} {sconto.}' },
];

const Checked = ({ text }: { text: string }) => (
  <>
    {text.split(/(\{[^}]*\})/).map((part, i) =>
      part.startsWith('{') ? <Misspelled key={i}>{part.slice(1, -1)}</Misspelled> : part,
    )}
  </>
);

const columns = 'ABCDEFGHIJKLMNOPQRSTUVWX'.split('');
const fixedWidths = [9, 24, 262, 9];

const Sheet = () => (
  <Grid>
    <colgroup>
      <col width={22} />
      {columns.map((c, i) => <col key={c} width={fixedWidths[i]} />)}
    </colgroup>
    <thead>
      <tr>
        <Corner />
        {columns.map(c => <ColumnHead key={c} scope="col" $selected={c === 'A'}>{c}</ColumnHead>)}
      </tr>
    </thead>
    <tbody>
      <Row $height={7}>
        <RowHead scope="row" $selected>1</RowHead>
        <ActiveCell />
        <Blank colSpan={23} />
      </Row>
      {sheetRows.map((row, i) => (
        <Row key={i} $height={row.kind === 'title' ? 36 : 20}>
          <RowHead scope="row">{i + 2}</RowHead>
          <Blank />
          {row.kind === 'title' && <TitleCell colSpan={2}><Checked text={row.text} /></TitleCell>}
          {row.kind === 'section' && <SectionCell colSpan={2}><Checked text={row.text} /></SectionCell>}
          {row.kind === 'item' && (
            <>
              <MarkerCell>{row.marker ?? <Dot />}</MarkerCell>
              <TextCell $tinted={i % 2 === 1}><Checked text={row.text} /></TextCell>
            </>
          )}
          <Blank colSpan={21} />
        </Row>
      ))}
    </tbody>
  </Grid>
);

const menus = ['File', 'Edit', 'View', 'Insert', 'Format', 'Styles', 'Sheet', 'Data', 'Tools', 'Window', 'Help'];
const tabs = ['Fattura', 'Riepilogo IVA', 'Parametri', 'Istruzioni'];
const sidePanels = [
  ['menu', 'Sidebar Settings'], ['properties', 'Properties'], ['styles', 'Styles'],
  ['gallery', 'Gallery'], ['navigator', 'Navigator'], ['fx', 'Functions'],
];
const navPaths = [
  'M1 1h2v12H1zM12 1L5 7l7 6v-3L8.500 7 12 4z',
  'M6 3L1 7l5 4V9L3.500 7 6 5zM13 3L8 7l5 4V9l-2.500-2L13 5z',
  'M1 3l5 4-5 4V9l2.500-2L1 5zM8 3l5 4-5 4V9l2.500-2L8 5z',
  'M13 1h-2v12h2zM2 1l7 6-7 6v-3l3.500-3L2 4z',
];

export default function App() {
  return (
    <AppWindow>
      <GlobalStyle />
      <MenuBar>
        {menus.map(m => <MenuItem key={m}>{m}</MenuItem>)}
        <CloseButton aria-label="Close Document">
          <Svg w={7} h={7}><path d="M1 1l5 5M6 1L1 6" stroke="#222" strokeWidth="1.800" /></Svg>
        </CloseButton>
      </MenuBar>
      <ToolBar><Tools items={standardTools} /></ToolBar>
      <ToolBar>
        <Combo $width={136}>
          <ComboInput aria-label="Font Name" defaultValue="Calibri" $italic />
          <ComboArrow aria-label="Font list"><Triangle big /></ComboArrow>
        </Combo>
        <Combo $width={66}>
          <ComboInput aria-label="Font Size" defaultValue="11 pt" />
          <ComboArrow aria-label="Size list"><Triangle big /></ComboArrow>
        </Combo>
        <Tools items={formattingTools} />
      </ToolBar>
      <Workspace>
        <Document>
          <FormulaBar>
            <Combo $width={107}>
              <ComboInput aria-label="Name Box" defaultValue="A1" />
              <ComboArrow aria-label="Named ranges"><Triangle big /></ComboArrow>
            </Combo>
            <Divider />
            <FormulaButton $width={16} aria-label="Function Wizard"><Icon name="fx" /></FormulaButton>
            <FormulaButton $width={16} aria-label="Select Function"><Icon name="sigma" /></FormulaButton>
            <FormulaButton $width={9} aria-label="Function list"><Triangle /></FormulaButton>
            <FormulaButton $width={16} aria-label="Formula"><Icon name="equals" /></FormulaButton>
            <FormulaInput aria-label="Input line" />
            <FormulaButton $width={12} aria-label="Expand Formula Bar"><Triangle big /></FormulaButton>
          </FormulaBar>
          <SheetArea>
            <SheetView><Sheet /></SheetView>
            <VerticalScroll><VerticalThumb /></VerticalScroll>
          </SheetArea>
          <HorizontalScroll><HorizontalThumb /><ScrollEnd /></HorizontalScroll>
          <TabBar>
            <TabNav>
              {navPaths.map((d, i) => (
                <TabNavButton key={d} aria-label={['First', 'Previous', 'Next', 'Last'][i]}>
                  <Svg w={14} h={14}><path d={d} fill="#fff" stroke="#c8c6c4" strokeWidth=".8" /></Svg>
                </TabNavButton>
              ))}
            </TabNav>
            <AddTab aria-label="Add Sheet">
              <Svg w={14} h={14}><path d="M0 0h9v14H0z" fill="#fff" stroke="#ddd" /><circle cx="10" cy="7" r="2.500" fill="#2f6fc0" stroke="none" /><path d="M10 5.500v3M8.500 7h3" stroke="#fff" /></Svg>
            </AddTab>
            {tabs.map(t => <Tab key={t} $active={t === 'Istruzioni'}>{t}</Tab>)}
          </TabBar>
        </Document>
        <SideBar>
          {sidePanels.map(([id, label]) => <SideButton key={id} aria-label={label}><Icon name={id} /></SideButton>)}
          <SideHandle aria-label="Hide Sidebar">
            <Svg w={3} h={4}><path d="M0 0l3 2-3 2z" fill="#fff" stroke="none" /></Svg>
          </SideHandle>
        </SideBar>
      </Workspace>
      <StatusBar>
        <StatusCell $width={191} $left>
          <Svg><path d="M2.500 2.500h11v11h-11zM5 2.500v4h6v-4M5 13.500v-4h6v4" stroke="#a0a0a0" /></Svg>
          Sheet 4 of 4
        </StatusCell>
        <StatusCell $width={170} />
        <StatusCell $left>PageStyle_Istruzioni</StatusCell>
        <StatusCell $width={181}>English (USA)</StatusCell>
        <StatusCell $width={46} />
        <StatusCell $width={30}>
          <Svg w={20} h={12}><path d="M1.500 3.500h11v6h-11z" fill="#fff" stroke={blue} /><path d="M17.500 1v10M15.500 .5h4M15.500 11.500h4" /></Svg>
        </StatusCell>
        <StatusCell $width={20} />
        <StatusCell $width={20} />
        <StatusCell $width={195}>Average: ; Sum: 0</StatusCell>
        <ZoomControls>
          <ZoomStep aria-label="Zoom Out"><Svg w={7} h={7}><path d="M0 3.500h7" stroke="#222" strokeWidth="1.500" /></Svg></ZoomStep>
          <ZoomSlider type="range" min={0} max={100} defaultValue={50} aria-label="Zoom" />
          <ZoomStep aria-label="Zoom In"><Svg w={7} h={7}><path d="M0 3.500h7M3.500 0v7" stroke="#222" strokeWidth="1.500" /></Svg></ZoomStep>
        </ZoomControls>
        <ZoomValue>100%</ZoomValue>
      </StatusBar>
    </AppWindow>
  );
}
